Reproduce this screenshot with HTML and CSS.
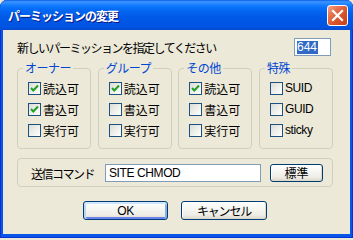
FILE: index.html
```html
<!DOCTYPE html>
<html lang="ja">
<head>
<meta charset="utf-8">
<title>パーミッションの変更</title>
<link rel="stylesheet" href="styles.css">
</head>
<body>
<div class="window">
  <div class="titlebar">
    <span class="title">パーミッションの変更</span>
    <span class="close" aria-label="閉じる">
      <svg width="19" height="19" viewBox="0 0 19 19"><path d="M5 5 L14 14 M14 5 L5 14" stroke="#fff" stroke-width="2.2" stroke-linecap="square" fill="none"/></svg>
    </span>
  </div>
  <div class="client">
    <div class="prompt">
      <span class="prompt-text">新しいパーミッションを指定してください</span>
      <span class="field mode"><span class="sel">644</span></span>
    </div>
    <div class="groups">
      <fieldset class="group">
        <legend>オーナー</legend>
        <div class="checks">
          <label class="check"><span class="cb"><svg width="11" height="11" viewBox="0 0 11 11"><path d="M2 5 L4.3 7.5 L9 2.5" stroke="#21A121" stroke-width="2" fill="none"/></svg></span>読込可</label>
          <label class="check"><span class="cb"><svg width="11" height="11" viewBox="0 0 11 11"><path d="M2 5 L4.3 7.5 L9 2.5" stroke="#21A121" stroke-width="2" fill="none"/></svg></span>書込可</label>
          <label class="check"><span class="cb"></span>実行可</label>
        </div>
      </fieldset>
      <fieldset class="group">
        <legend>グループ</legend>
        <div class="checks">
          <label class="check"><span class="cb"><svg width="11" height="11" viewBox="0 0 11 11"><path d="M2 5 L4.3 7.5 L9 2.5" stroke="#21A121" stroke-width="2" fill="none"/></svg></span>読込可</label>
          <label class="check"><span class="cb"></span>書込可</label>
          <label class="check"><span class="cb"></span>実行可</label>
        </div>
      </fieldset>
      <fieldset class="group">
        <legend>その他</legend>
        <div class="checks">
          <label class="check"><span class="cb"><svg width="11" height="11" viewBox="0 0 11 11"><path d="M2 5 L4.3 7.5 L9 2.5" stroke="#21A121" stroke-width="2" fill="none"/></svg></span>読込可</label>
          <label class="check"><span class="cb"></span>書込可</label>
          <label class="check"><span class="cb"></span>実行可</label>
        </div>
      </fieldset>
      <fieldset class="group">
        <legend>特殊</legend>
        <div class="checks">
          <label class="check latin"><span class="cb"></span>SUID</label>
          <label class="check latin"><span class="cb"></span>GUID</label>
          <label class="check latin"><span class="cb"></span>sticky</label>
        </div>
      </fieldset>
    </div>
    <div class="command">
      <span class="cmd-label">送信コマンド</span>
      <span class="field cmd latin">SITE CHMOD</span>
      <button class="btn std">標準</button>
    </div>
    <div class="actions">
      <button class="btn default ok latin">OK</button>
      <button class="btn cancel">キャンセル</button>
    </div>
  </div>
</div>
</body>
</html>
```

FILE: styles.css
```css
html, body {
  margin: 0;
  padding: 0;
  background: #ECE9D8;
}

body {
  font-family: "Noto Sans CJK JP", sans-serif;
  font-size: 12px;
  color: #000;
}

.window {
  width: 353px;
  height: 238px;
  box-sizing: border-box;
  display: flex;
  flex-direction: column;
  background: #0856E6;
  border-radius: 7px 7px 0 0;
  overflow: hidden;
  box-shadow: inset 1px 0 #0831D9, inset -1px 0 #0831D9, inset 0 -1px #0831D9;
}

.titlebar {
  height: 30px;
  flex: none;
  display: flex;
  align-items: flex-start;
  background: linear-gradient(to bottom, #0A5FE8 0%, #3D95FF 6%, #2E8CFF 10%, #1A80FF 16%, #066FF8 26%, #0262EE 42%, #0058E6 62%, #0055E3 82%, #0053E0 93%, #0B48C8 100%);
  border-radius: 7px 7px 0 0;
}

.title {
  color: #fff;
  font-weight: bold;
  font-size: 12px;
  line-height: 14px;
  letter-spacing: -1px;
  margin: 9px 0 0 8px;
  text-shadow: 1px 1px #0A1883;
}

.close {
  margin: 5px 5px 0 auto;
  width: 21px;
  height: 21px;
  box-sizing: border-box;
  border: 1px solid #fff;
  border-radius: 3px;
  background: linear-gradient(135deg, #F2A58E 0%, #E6734F 30%, #D9522A 62%, #C5401A 100%);
  display: flex;
  align-items: center;
  justify-content: center;
}

.client {
  flex: 1;
  margin: 0 3px 4px;
  background: #ECE9D8;
  padding: 0 17px 0 14px;
}

.prompt {
  margin-top: 8px;
  height: 18px;
  display: flex;
  align-items: center;
  justify-content: space-between;
  width: 316px;
}

.prompt-text {
  letter-spacing: -1.5px;
}

.latin {
  font-family: "Liberation Sans", sans-serif;
  font-size: 12px;
  letter-spacing: -0.4px;
}

.field {
  box-sizing: border-box;
  height: 18px;
  border: 1px solid #7F9DB9;
  background: #fff;
  display: flex;
  align-items: center;
  padding-left: 2px;
}

.mode {
  width: 37px;
  margin-right: 2px;
  font-family: "Liberation Sans", sans-serif;
  font-size: 12px;
}

.sel {
  background: #316AC5;
  color: #fff;
  line-height: 13px;
  padding: 0 1px 0 0;
}

.groups {
  margin-top: 6px;
  width: 316px;
  display: flex;
  justify-content: space-between;
}

.group {
  width: 74px;
  height: 87px;
  box-sizing: border-box;
  margin: 0;
  padding: 0;
  min-width: 0;
  border: 1px solid #D0D0BF;
  border-radius: 4px;
}

.group legend {
  color: #0046D5;
  font-size: 12px;
  line-height: 12px;
  letter-spacing: -0.5px;
  padding: 0 2px;
  margin-left: 5px;
}

.checks {
  padding: 8px 0 0 10px;
  display: flex;
  flex-direction: column;
  gap: 8px;
}

.check {
  height: 13px;
  line-height: 13px;
  display: flex;
  align-items: center;
  gap: 2px;
  white-space: nowrap;
}

.cb {
  width: 13px;
  height: 13px;
  box-sizing: border-box;
  border: 1px solid #1C5180;
  background: linear-gradient(135deg, #DCDCD7 0%, #F0F0EC 55%, #FFFFFF 100%);
  display: flex;
  align-items: center;
  justify-content: center;
  flex: none;
}

.cb svg {
  display: block;
}

.command {
  margin-top: 9px;
  width: 316px;
  height: 29px;
  box-sizing: border-box;
  border: 1px solid #D0D0BF;
  border-radius: 4px;
  display: flex;
  align-items: center;
  padding: 1px 0 0 13px;
}

.cmd-label {
  width: 74px;
  flex: none;
  letter-spacing: -1.5px;
}

.cmd {
  width: 156px;
  padding-left: 3px;
}

.btn {
  box-sizing: border-box;
  border: 1px solid #003C74;
  border-radius: 3px;
  background: linear-gradient(to bottom, #FFFFFF 0%, #F7F7F4 35%, #EEEDE7 75%, #E2DED3 92%, #D6D0C5 100%);
  box-shadow: inset -1px -1px #DCD8CC, inset 1px 1px #FFFFFF;
  font-family: "Noto Sans CJK JP", sans-serif;
  font-size: 12px;
  color: #000;
  padding: 0;
  line-height: 16px;
}

.btn.latin {
  font-family: "Liberation Sans", sans-serif;
  font-size: 12px;
}

.std {
  width: 53px;
  height: 18px;
  margin-left: 9px;
}

.actions {
  margin-top: 14px;
  padding-left: 66px;
  display: flex;
  gap: 13px;
}

.ok {
  width: 85px;
  height: 19px;
}

.cancel {
  width: 86px;
  height: 19px;
  letter-spacing: -1.2px;
}

.default {
  box-shadow: inset 0 2px #CEE7FF, inset 2px 0 #BCD4F6, inset -2px 0 #89ADE4, inset 0 -2px #6982EE;
}
```
